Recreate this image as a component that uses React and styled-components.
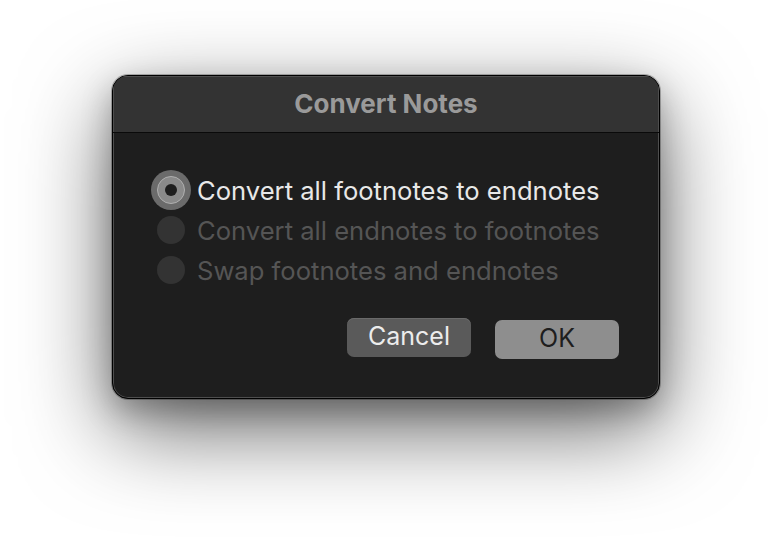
import React, { useState } from 'react';
import styled, { createGlobalStyle } from 'styled-components';

const GlobalStyle = createGlobalStyle`
  html, body {
    margin: 0;
    padding: 0;
    background: #ffffff;
  }
  body {
    font-family: Inter, "Liberation Sans", sans-serif;
  }
`;

const Page = styled.div`
  width: 772px;
  height: 548px;
  padding: 75px 0 0 112px;
  box-sizing: border-box;
  overflow: hidden;
`;

const Dialog = styled.div`
  width: 548px;
  height: 324px;
  box-sizing: border-box;
  display: flex;
  flex-direction: column;
  background: #1e1e1e;
  border-radius: 16px;
  overflow: hidden;
  border: 1px solid #000;
  box-shadow:
    inset 0 0 0 1px #4e4e4e,
    0 30px 90px rgba(0, 0, 0, 0.6),
    0 12px 30px rgba(0, 0, 0, 0.25),
    0 0 0 1px rgba(0, 0, 0, 0.25);
`;

const TitleBar = styled.div`
  height: 56px;
  flex-shrink: 0;
  display: flex;
  align-items: center;
  justify-content: center;
  background: #333333;
  border-bottom: 1px solid #0a0a0a;
  box-shadow: inset 0 1px 0 #4e4e4e, inset 1px 0 0 #4e4e4e, inset -1px 0 0 #4e4e4e;
`;

const Title = styled.h1`
  margin: 0 0 2px;
  font-size: 26px;
  font-weight: 700;
  color: #9a9a9a;
`;

const Body = styled.div`
  flex: 1;
  display: flex;
  flex-direction: column;
  padding: 37px 40px 0 44px;
`;

const Options = styled.div`
  display: flex;
  flex-direction: column;
`;

const OptionRow = styled.label`
  height: 40px;
  display: flex;
  align-items: center;
  gap: 12px;
  cursor: ${(p) => (p.$disabled ? 'default' : 'pointer')};
`;

const Radio = styled.span`
  width: 28px;
  height: 28px;
  border-radius: 50%;
  box-sizing: border-box;
  display: flex;
  align-items: center;
  justify-content: center;
  flex-shrink: 0;
  background: ${(p) => (p.$checked ? '#8a8a8a' : '#333333')};
  border: ${(p) => (p.$checked ? '1px solid #b0b0b0' : 'none')};
  box-shadow: ${(p) => (p.$checked ? '0 0 0 6px #6b6b6b' : 'none')};

  &::after {
    content: '';
    display: ${(p) => (p.$checked ? 'block' : 'none')};
    width: 12px;
    height: 12px;
    border-radius: 50%;
    background: #1e1e1e;
  }
`;

const OptionText = styled.span`
  font-size: 25.6px;
  color: ${(p) => (p.$disabled ? '#555555' : '#e8e8e8')};
`;

const Buttons = styled.div`
  display: flex;
  justify-content: flex-end;
  align-items: flex-start;
  gap: 24px;
  margin-top: 28px;
`;

const Button = styled.button`
  width: 124px;
  height: 39px;
  margin-top: ${(p) => (p.$primary ? '2px' : '0')};
  border: none;
  border-radius: 7px;
  font-family: inherit;
  font-size: 25px;
  line-height: 1;
  background: ${(p) => (p.$primary ? '#8e8e8e' : '#5a5a5a')};
  color: ${(p) => (p.$primary ? '#1e1e1e' : '#ececec')};
  box-shadow: ${(p) => (p.$primary ? 'none' : 'inset 0 1px 0 #6a6a6a')};
  padding: 0 0 2px;
  cursor: pointer;
`;

const options = [
  { label: 'Convert all footnotes to endnotes', disabled: false },
  { label: 'Convert all endnotes to footnotes', disabled: true },
  { label: 'Swap footnotes and endnotes', disabled: true },
];

export default function App() {
  const [selected, setSelected] = useState(0);
  return (
    <Page>
      <GlobalStyle />
      <Dialog>
        <TitleBar>
          <Title>Convert Notes</Title>
        </TitleBar>
        <Body>
          <Options>
            {options.map((o, i) => (
              <OptionRow
                key={o.label}
                $disabled={o.disabled}
                onClick={() => !o.disabled && setSelected(i)}
              >
                <Radio $checked={selected === i} />
                <OptionText $disabled={o.disabled}>{o.label}</OptionText>
              </OptionRow>
            ))}
          </Options>
          <Buttons>
            <Button>Cancel</Button>
            <Button $primary>OK</Button>
          </Buttons>
        </Body>
      </Dialog>
    </Page>
  );
}
